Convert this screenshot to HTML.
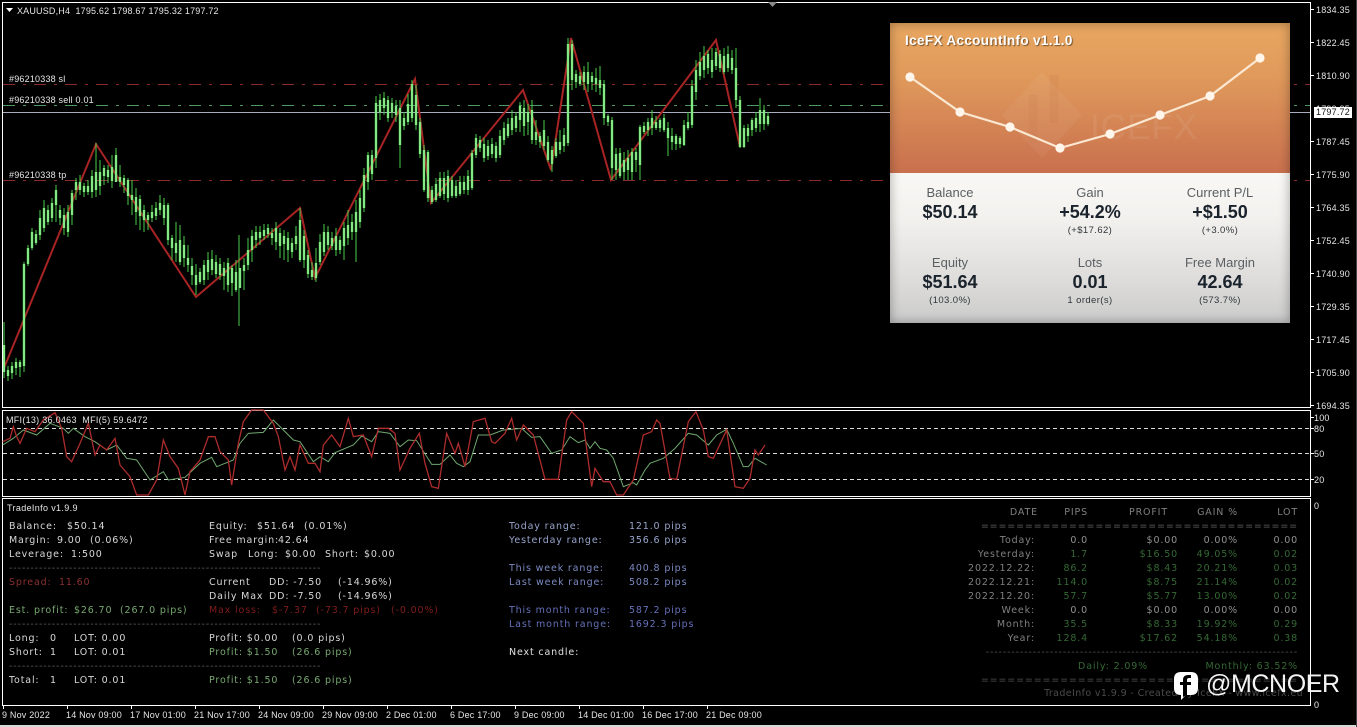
<!DOCTYPE html>
<html><head><meta charset="utf-8"><title>XAUUSD,H4</title>
<style>
*{margin:0;padding:0;box-sizing:border-box}
html,body{width:1357px;height:727px;background:#000;overflow:hidden}
body{position:relative;font-family:"Liberation Sans",sans-serif;color:#e8e8e8}
.a{position:absolute;white-space:pre}
.s{font-size:9px;line-height:12px;color:#e6e6e6;margin-top:1px;letter-spacing:.2px}
#tx{position:absolute;left:0;top:3px;width:1357px;height:700px}
#tx i{position:absolute;font-style:normal;white-space:pre;font-family:"DejaVu Sans",sans-serif;font-size:9.5px;line-height:14px;letter-spacing:.85px;color:#d8d8d8}
#tx i.g{color:#77a870}#tx i.r{color:#8a3030}#tx i.d{color:#801c1c}#tx i.b1{color:#98a5cc}#tx i.b2{color:#7c8ac2}#tx i.b3{color:#6570b8}
#tx i.h{color:#5a5a5a}
.c{position:absolute;text-align:right;white-space:pre;font-family:"DejaVu Sans",sans-serif;font-size:9.5px;line-height:14px;letter-spacing:.85px;color:#808080}
.k{color:#356835}.w{color:#929292}
#panel{position:absolute;left:890px;top:23px;width:400px;height:300px;overflow:hidden}
#pt{position:absolute;left:0;top:0;width:400px;height:150px;background:linear-gradient(#e8a761,#e09a5b 35%,#c9704e)}
#pb{position:absolute;left:0;top:150px;width:400px;height:150px;background:linear-gradient(#faf8f5,#f3f1ee 30%,#dedddb 70%,#cbcbcb)}
#pv{position:absolute;inset:0;box-shadow:inset 0 0 11px rgba(0,0,0,.33)}
.t{position:absolute;width:160px;text-align:center;color:#1a222c}
.l{font-size:13px;line-height:16px;color:#5a5f63;margin-top:1px}
.v{font-size:18px;line-height:22px;font-weight:bold;margin-top:1px}
.n{font-size:9.5px;line-height:12px;color:#30353a;letter-spacing:.4px;margin-top:1px}
</style></head><body>

<svg class="a" style="left:0;top:0" width="1357" height="727">
<defs>
<path id="bd" d="M4 345V372M8 370V376M12 366V373M16 362V368M20 362V367M24 264V366M28 248V264M32 232V248M36 234V243M40 218V235M44 208V228M48 210V222M52 203V218M56 190V205M60 210V218M64 215V228M68 212V232M72 193V215M76 182V190M80 182V190M84 186V192M88 186V192M92 176V192M96 172V190M100 172V186M104 168V176M108 170V177M112 167V181M116 155V182M120 177V182M124 178V185M128 180V196M132 195V200M136 197V212M140 199V216M144 210V220M148 215V220M152 212V218M156 208V216M160 203V210M164 205V218M168 205V240M172 238V248M176 243V253M180 240V262M184 245V258M188 258V265M192 266V275M196 275V285M200 272V282M204 265V280M208 260V272M212 259V270M216 262V274M220 264V275M224 268V276M228 263V285M232 268V283M236 272V290M240 268V288M244 265V271M248 250V265M252 236V250M256 232V240M260 232V238M264 230V236M268 228V234M272 233V238M276 228V242M280 233V246M284 236V244M288 238V250M292 243V252M296 236V244M300 220V260M304 236V260M308 255V274M312 270V277M316 263V278M320 242V262M324 232V252M328 232V245M332 238V246M336 236V250M340 240V250M344 228V246M348 225V238M352 222V232M356 212V232M360 198V222M364 175V208M368 155V182M372 155V174M376 103V158M380 100V112M384 98V108M388 100V118M392 103V112M396 106V115M400 108V145M404 118V126M408 104V122M412 84V118M416 95V125M420 122V154M424 150V190M428 152V198M432 190V202M436 184V200M440 178V196M444 178V194M448 176V198M452 180V196M456 186V196M460 182V194M464 182V190M468 176V190M472 153V188M476 138V155M480 140V148M484 144V158M488 146V156M492 144V154M496 146V158M500 136V155M504 128V140M508 124V136M512 118V130M516 116V128M520 106V120M524 108V126M528 112V122M532 110V140M536 132V140M540 136V142M544 130V146M548 142V160M552 150V164M556 142V156M560 142V150M564 135V146M568 44V143M572 44V80M576 74V82M580 76V84M584 72V82M588 72V84M592 76V82M596 78V84M600 80V88M604 84V118M608 116V122M612 120V168M616 154V170M620 153V176M624 160V172M628 158V170M632 152V172M636 152V160M640 127V165M644 126V132M648 122V130M652 118V128M656 122V128M660 120V128M664 118V130M668 128V138M672 136V142M676 136V144M680 138V144M684 125V145M688 122V128M692 86V125M696 70V92M700 62V76M704 56V70M708 54V68M712 60V72M716 52V66M720 54V68M724 56V72M728 54V68M732 58V70M736 68V100M740 100V147M744 128V147M748 128V136M752 120V130M756 118V128M760 110V124M764 110V124M768 116V124"/>
</defs>
<g fill="none" stroke-width="1">
<line x1="3" x2="1310" y1="84.5" y2="84.5" stroke="#8a2a2a" stroke-dasharray="12 8 3 8"/>
<line x1="3" x2="1310" y1="105.5" y2="105.5" stroke="#4f9a60" stroke-dasharray="12 8 3 8"/>
<line x1="3" x2="1310" y1="112.5" y2="112.5" stroke="#a9adc0"/>
<line x1="3" x2="1310" y1="180.5" y2="180.5" stroke="#8a2a2a" stroke-dasharray="12 8 3 8"/>
</g>
<polyline fill="none" stroke="#a82424" stroke-width="2" points="4,368 96,144 196,297 300,208 315,278 415,79 431,203 523,90 551,170 571,38 611,180 716,40 740,147"/>
<path fill="none" stroke="#4ad04a" stroke-width="1" d="M4 322V378M8 366V381M12 362V379M16 358V375M20 360V377M24 262V372M28 245V266M32 228V250M36 230V245M40 210V240M44 200V232M48 205V225M52 198V222M56 185V222M60 205V225M64 208V235M68 205V237M72 190V225M76 178V200M80 175V195M84 183V197M88 180V195M92 170V198M96 143V197M100 160V195M104 165V185M108 165V183M112 155V188M116 148V180M120 165V187M124 175V193M128 178V205M132 180V215M136 188V225M140 195V230M144 205V232M148 212V230M152 205V222M156 202V220M160 195V215M164 198V225M168 203V245M172 235V260M176 222V262M180 225V265M184 236V267M188 245V272M192 258V285M196 264V295M200 268V284M204 260V285M208 252V280M212 250V275M216 255V278M220 258V280M224 262V290M228 258V292M232 265V296M236 260V292M239 235V326M244 258V290M248 238V270M252 230V262M256 226V248M260 226V245M264 224V240M268 224V238M272 228V245M276 222V250M280 228V258M284 230V260M288 232V262M292 238V258M296 226V250M300 208V262M304 230V268M308 250V278M312 262V280M316 248V282M320 234V265M324 224V256M328 226V250M332 232V250M336 228V256M340 236V254M344 222V260M348 210V245M352 214V240M356 200V262M360 190V228M364 168V212M368 152V190M372 150V180M376 96V168M380 94V120M384 92V115M388 96V122M392 98V118M396 100V122M400 100V168M404 112V130M408 94V125M412 80V122M416 85V130M420 118V158M424 145V192M428 150V202M432 186V204M436 178V202M440 172V198M444 172V200M448 170V202M452 176V198M456 180V198M460 176V196M464 176V194M468 170V195M472 150V190M476 134V158M480 136V152M484 138V162M488 140V160M492 138V158M496 142V162M500 130V158M504 122V145M508 118V138M512 110V135M516 112V132M520 102V132M524 100V136M528 104V135M532 100V144M536 120V145M540 132V148M544 120V150M548 136V162M552 146V172M556 138V158M560 130V154M564 128V152M568 38V146M572 40V90M576 70V88M580 72V86M584 66V90M588 62V92M592 72V90M596 68V92M600 66V95M604 80V125M608 114V126M612 117V180M616 148V180M620 148V178M624 152V180M628 150V180M632 148V180M636 148V172M640 125V180M644 122V134M648 118V136M652 110V135M656 116V130M660 118V132M664 114V132M668 122V156M672 128V150M676 134V150M680 136V148M684 120V146M688 112V130M692 80V128M696 60V100M700 52V80M704 46V78M708 50V74M712 48V78M716 48V70M720 50V72M724 48V74M728 46V72M732 50V74M736 48V108M740 96V148M744 125V148M748 124V142M752 118V136M756 112V132M760 98V132M764 105V130M768 112V126"/>
<use href="#bd" fill="none" stroke="#55d855" stroke-width="2.4"/>
<use href="#bd" fill="none" stroke="#b4f8b4" stroke-width="1"/>
<g fill="none" stroke="#fff" stroke-width="1">
<path d="M2.5 407.5V2.5H1310.5V407.5Z"/>
<path d="M2.5 410.5H1310.5V496.5H2.5Z"/>
<path d="M2.5 498.5H1310.5V705.5H2.5Z"/>
<path d="M3.5 705V709M67.5 705V709M131.5 705V709M195.5 705V709M259.5 705V709M323.5 705V709M387.5 705V709M451.5 705V709M515.5 705V709M579.5 705V709M643.5 705V709M707.5 705V709"/>
<path d="M1311 9.5H1314M1311 42.5H1314M1311 75.5H1314M1311 141.5H1314M1311 174.5H1314M1311 207.5H1314M1311 240.5H1314M1311 273.5H1314M1311 306.5H1314M1311 339.5H1314M1311 372.5H1314M1311 405.5H1314M1311 417.5H1314M1311 428.5H1314M1311 453.5H1314M1311 479.5H1314"/>
</g>
<g stroke="#dcdcdc" stroke-width="1" stroke-dasharray="4 3" fill="none">
<line x1="3" x2="1310" y1="428.5" y2="428.5"/>
<line x1="3" x2="1310" y1="453.5" y2="453.5"/>
<line x1="3" x2="1310" y1="479.5" y2="479.5"/>
</g>
<g transform="translate(0,400) scale(.33333)" fill="none">
<polyline vector-effect="non-scaling-stroke" stroke="#6fa86f" stroke-width="1" points="8,135 40,115 70,90 110,105 150,70 190,85 205,100 220,85 255,110 285,125 320,150 350,135 380,175 410,180 450,240 490,215 505,240 555,232 600,190 635,172 650,200 700,180 720,130 745,100 790,97 820,60 850,90 880,120 900,125 940,185 960,170 985,185 1005,158 1060,135 1085,108 1115,125 1135,95 1170,100 1200,140 1225,120 1250,122 1295,193 1320,193 1350,165 1370,190 1390,200 1410,185 1435,105 1470,105 1510,90 1565,85 1595,112 1620,110 1655,160 1685,150 1710,110 1735,128 1755,120 1770,145 1785,125 1800,145 1820,150 1840,175 1870,260 1900,248 1910,255 1935,210 1950,190 1990,175 2025,145 2065,100 2090,105 2125,135 2150,105 2180,88 2200,130 2230,200 2245,200 2265,175 2300,195"/>
<polyline vector-effect="non-scaling-stroke" stroke="#ad2c2c" stroke-width="1.3" points="8,125 30,115 40,80 50,110 60,130 80,85 105,95 130,60 165,38 185,85 200,170 215,185 240,130 265,70 285,165 300,135 320,150 345,115 360,195 390,230 410,285 445,285 470,240 490,120 510,170 535,205 555,285 570,215 600,180 625,110 645,110 660,155 685,180 695,255 715,130 730,65 755,30 790,30 820,70 835,110 855,210 870,170 885,210 900,135 925,190 945,190 960,215 970,135 995,105 1020,140 1045,55 1060,110 1090,105 1115,170 1135,85 1165,85 1185,100 1200,210 1230,145 1258,100 1275,190 1295,260 1315,265 1340,100 1350,125 1365,160 1375,130 1395,200 1420,65 1455,55 1475,125 1485,130 1515,100 1535,55 1550,120 1570,75 1600,105 1635,238 1675,238 1700,60 1715,35 1750,70 1775,260 1785,205 1810,245 1830,245 1850,285 1870,285 1900,240 1930,105 1955,95 1970,60 1980,70 2010,235 2030,238 2065,65 2088,35 2110,90 2125,170 2140,175 2180,90 2205,260 2230,265 2250,235 2265,150 2275,165 2295,135"/>
</g>
<path d="M768 2H777L772.5 7Z" fill="#8a8a8a"/>
<path d="M6 8H13L9.5 12Z" fill="#fff"/>
<rect x="0" y="725" width="1357" height="2" fill="#d8d8d8"/>
<rect x="1356" y="0" width="1" height="727" fill="#444"/>
</svg>

<div class="a s" style="left:17px;top:4px;letter-spacing:.18px">XAUUSD,H4  1795.62 1798.67 1795.32 1797.72</div>
<div class="a s" style="left:9px;top:72px">#96210338 sl</div>
<div class="a s" style="left:9px;top:93px">#96210338 sell 0.01</div>
<div class="a s" style="left:9px;top:168px">#96210338 tp</div>
<div class="a s" style="left:6px;top:413px;letter-spacing:.28px">MFI(13) 36.0463  MFI(5) 59.6472</div>
<div class="a s" style="left:7px;top:501px;letter-spacing:.35px">TradeInfo v1.9.9</div>

<div class="a s" style="left:1316px;top:3px">1834.35</div>
<div class="a s" style="left:1316px;top:36px">1822.45</div>
<div class="a s" style="left:1316px;top:69px">1810.90</div>
<div class="a s" style="left:1316px;top:102px">1799.35</div>
<div class="a s" style="left:1314px;top:106px;width:38px;height:11px;background:#fff;color:#111;padding-left:2px;line-height:11px">1797.72</div>
<div class="a s" style="left:1316px;top:135px">1787.45</div>
<div class="a s" style="left:1316px;top:168px">1775.90</div>
<div class="a s" style="left:1316px;top:201px">1764.35</div>
<div class="a s" style="left:1316px;top:234px">1752.45</div>
<div class="a s" style="left:1316px;top:267px">1740.90</div>
<div class="a s" style="left:1316px;top:300px">1729.35</div>
<div class="a s" style="left:1316px;top:333px">1717.45</div>
<div class="a s" style="left:1316px;top:366px">1705.90</div>
<div class="a s" style="left:1316px;top:399px">1694.35</div>
<div class="a s" style="left:1314px;top:411px">100</div>
<div class="a s" style="left:1314px;top:422px">80</div>
<div class="a s" style="left:1314px;top:447px">50</div>
<div class="a s" style="left:1314px;top:473px">20</div>
<div class="a s" style="left:1314px;top:499px">0</div>
<div class="a s" style="left:1314px;top:698px">0</div>

<div class="a s" style="left:2px;top:708px">9 Nov 2022</div>
<div class="a s" style="left:66px;top:708px">14 Nov 09:00</div>
<div class="a s" style="left:130px;top:708px">17 Nov 01:00</div>
<div class="a s" style="left:194px;top:708px">21 Nov 17:00</div>
<div class="a s" style="left:258px;top:708px">24 Nov 09:00</div>
<div class="a s" style="left:322px;top:708px">29 Nov 09:00</div>
<div class="a s" style="left:386px;top:708px">2 Dec 01:00</div>
<div class="a s" style="left:450px;top:708px">6 Dec 17:00</div>
<div class="a s" style="left:514px;top:708px">9 Dec 09:00</div>
<div class="a s" style="left:578px;top:708px">14 Dec 01:00</div>
<div class="a s" style="left:642px;top:708px">16 Dec 17:00</div>
<div class="a s" style="left:706px;top:708px">21 Dec 09:00</div>

<div id="panel">
<div id="pt"></div><div id="pb"></div>
<svg class="a" style="left:0;top:0" width="400" height="150">
<path d="M112 92L152 49 192 92 152 135Z" fill="#fff" fill-opacity=".05"/>
<text x="200" y="116" font-family="Liberation Sans,sans-serif" font-size="35" fill="#fff" fill-opacity=".07" letter-spacing="1">ICEFX</text>
<path d="M143 72V120M164 52V100" stroke="#c97a4c" stroke-opacity=".18" stroke-width="9" fill="none"/>
<polyline fill="none" stroke="#fbe8d2" stroke-width="2.2" points="20,54 70,89 120,104 170,125 220,111 270,92 320,73 370,35"/>
<g fill="#fff5ea"><circle cx="20" cy="54" r="4.6"/><circle cx="70" cy="89" r="4.6"/><circle cx="120" cy="104" r="4.6"/><circle cx="170" cy="125" r="4.6"/><circle cx="220" cy="111" r="4.6"/><circle cx="270" cy="92" r="4.6"/><circle cx="320" cy="73" r="4.6"/><circle cx="370" cy="35" r="4.6"/></g>
</svg>
<div class="a" style="left:15px;top:9px;font-size:13.5px;line-height:17px;font-weight:bold;color:#fff;letter-spacing:.35px;text-shadow:1px 1px 1px rgba(90,60,30,.8)">IceFX AccountInfo v1.1.0</div>
<div id="pv"></div>
<div class="t l" style="left:-20px;top:161px">Balance</div>
<div class="t v" style="left:-20px;top:177px">$50.14</div>
<div class="t l" style="left:120px;top:161px">Gain</div>
<div class="t v" style="left:120px;top:177px">+54.2%</div>
<div class="t n" style="left:120px;top:201px">(+$17.62)</div>
<div class="t l" style="left:250px;top:161px">Current P/L</div>
<div class="t v" style="left:250px;top:177px">+$1.50</div>
<div class="t n" style="left:250px;top:201px">(+3.0%)</div>
<div class="t l" style="left:-20px;top:231px">Equity</div>
<div class="t v" style="left:-20px;top:247px">$51.64</div>
<div class="t n" style="left:-20px;top:271px">(103.0%)</div>
<div class="t l" style="left:120px;top:231px">Lots</div>
<div class="t v" style="left:120px;top:247px">0.01</div>
<div class="t n" style="left:120px;top:271px">1 order(s)</div>
<div class="t l" style="left:250px;top:231px">Free Margin</div>
<div class="t v" style="left:250px;top:247px">42.64</div>
<div class="t n" style="left:250px;top:271px">(573.7%)</div>
</div>

<div id="tx">
<i style="left:9px;top:517px">Balance:</i><i style="left:67px;top:517px">$50.14</i>
<i style="left:9px;top:531px">Margin:</i><i style="left:57px;top:531px">9.00</i><i style="left:90px;top:531px">(0.06%)</i>
<i style="left:9px;top:545px">Leverage:</i><i style="left:71px;top:545px">1:500</i>
<i style="left:209px;top:517px">Equity:</i><i style="left:257px;top:517px">$51.64</i><i style="left:304px;top:517px">(0.01%)</i>
<i style="left:209px;top:531px">Free margin:</i><i style="left:278px;top:531px">42.64</i>
<i style="left:209px;top:545px">Swap</i><i style="left:248px;top:545px">Long:</i><i style="left:285px;top:545px">$0.00</i><i style="left:325px;top:545px">Short:</i><i style="left:364px;top:545px">$0.00</i>
<i class="h" style="left:9px;top:559px">-------------------------------------------------------------------------</i>
<i class="r" style="left:9px;top:573px">Spread:</i><i class="r" style="left:59px;top:573px">11.60</i>
<i style="left:209px;top:573px">Current</i><i style="left:269px;top:573px">DD: -7.50</i><i style="left:338px;top:573px">(-14.96%)</i>
<i style="left:209px;top:587px">Daily Max</i><i style="left:269px;top:587px">DD: -7.50</i><i style="left:338px;top:587px">(-14.96%)</i>
<i class="g" style="left:9px;top:601px">Est. profit:</i><i class="g" style="left:74px;top:601px">$26.70</i><i class="g" style="left:120px;top:601px">(267.0 pips)</i>
<i class="d" style="left:209px;top:601px">Max loss:</i><i class="d" style="left:272px;top:601px">$-7.37</i><i class="d" style="left:316px;top:601px">(-73.7 pips)</i><i class="d" style="left:391px;top:601px">(-0.00%)</i>
<i class="h" style="left:9px;top:615px">-------------------------------------------------------------------------</i>
<i style="left:9px;top:629px">Long:</i><i style="left:50px;top:629px">0</i><i style="left:74px;top:629px">LOT: 0.00</i>
<i style="left:9px;top:643px">Short:</i><i style="left:50px;top:643px">1</i><i style="left:74px;top:643px">LOT: 0.01</i>
<i style="left:209px;top:629px">Profit: $0.00</i><i style="left:292px;top:629px">(0.0 pips)</i>
<i class="g" style="left:209px;top:643px">Profit: $1.50</i><i class="g" style="left:292px;top:643px">(26.6 pips)</i>
<i class="h" style="left:9px;top:657px">-------------------------------------------------------------------------</i>
<i style="left:9px;top:671px">Total:</i><i style="left:50px;top:671px">1</i><i style="left:74px;top:671px">LOT: 0.01</i>
<i class="g" style="left:209px;top:671px">Profit: $1.50</i><i class="g" style="left:292px;top:671px">(26.6 pips)</i>

<i class="b1" style="left:509px;top:517px">Today range:</i><i class="b1" style="left:629px;top:517px">121.0 pips</i>
<i class="b1" style="left:509px;top:531px">Yesterday range:</i><i class="b1" style="left:629px;top:531px">356.6 pips</i>
<i class="b2" style="left:509px;top:559px">This week range:</i><i class="b2" style="left:629px;top:559px">400.8 pips</i>
<i class="b2" style="left:509px;top:573px">Last week range:</i><i class="b2" style="left:629px;top:573px">508.2 pips</i>
<i class="b3" style="left:509px;top:601px">This month range:</i><i class="b3" style="left:629px;top:601px">587.2 pips</i>
<i class="b3" style="left:509px;top:615px">Last month range:</i><i class="b3" style="left:629px;top:615px">1692.3 pips</i>
<i style="left:509px;top:643px;color:#e0e0e0">Next candle:</i>

<div class="c" style="right:319px;top:503px">DATE</div>
<div class="c" style="right:269px;top:503px">PIPS</div>
<div class="c" style="right:189px;top:503px">PROFIT</div>
<div class="c" style="right:119px;top:503px">GAIN %</div>
<div class="c" style="right:59px;top:503px">LOT</div>
<div class="c" style="right:322px;top:531px">Today:
Yesterday:
2022.12.22:
2022.12.21:
2022.12.20:
Week:
Month:
Year:</div>
<div class="c" style="right:269px;top:531px"><span class="w">0.0</span>
<span class="k">1.7</span>
<span class="k">86.2</span>
<span class="k">114.0</span>
<span class="k">57.7</span>
<span class="w">0.0</span>
<span class="k">35.5</span>
<span class="k">128.4</span></div>
<div class="c" style="right:179px;top:531px"><span class="w">$0.00</span>
<span class="k">$16.50</span>
<span class="k">$8.43</span>
<span class="k">$8.75</span>
<span class="k">$5.77</span>
<span class="w">$0.00</span>
<span class="k">$8.33</span>
<span class="k">$17.62</span></div>
<div class="c" style="right:119px;top:531px"><span class="w">0.00%</span>
<span class="k">49.05%</span>
<span class="k">20.21%</span>
<span class="k">21.14%</span>
<span class="k">13.00%</span>
<span class="w">0.00%</span>
<span class="k">19.92%</span>
<span class="k">54.18%</span></div>
<div class="c" style="right:59px;top:531px"><span class="w">0.00</span>
<span class="k">0.02</span>
<span class="k">0.03</span>
<span class="k">0.02</span>
<span class="k">0.02</span>
<span class="w">0.00</span>
<span class="k">0.29</span>
<span class="k">0.38</span></div>
<div class="c" style="right:59px;top:517px;color:#5f5f5f">====================================</div>
<div class="c" style="right:59px;top:643px;color:#4f4f4f">-------------------------------------------------------------------------</div>
<div class="c" style="right:209px;top:657px;color:#356835">Daily: 2.09%</div>
<div class="c" style="right:59px;top:657px;color:#356835">Monthly: 63.52%</div>
<div class="c" style="right:59px;top:671px;color:#4f4f4f">====================================</div>
<div class="c" style="right:54px;top:684px;color:#4a4a4a;letter-spacing:.38px">TradeInfo v1.9.9 - Created by IceFX - www.icefx.eu</div>
</div>

<svg class="a" style="left:1173px;top:671px" width="26" height="30">
<path d="M8 1H18Q25 1 25 8V17Q25 24 18 24H13L8 29V24Q1 24 1 17V8Q1 1 8 1Z" fill="#fff"/>
<path d="M14 24V14H18V11H14V9Q14 7 16 7H18V4H15Q10 4 10 9V11H7V14H10V26Z" fill="#000"/>
</svg>
<div class="a" style="left:1206px;top:669px;font-size:25px;line-height:30px;color:#f4f4f4;letter-spacing:-.4px">@MCNOER</div>
</body></html>
